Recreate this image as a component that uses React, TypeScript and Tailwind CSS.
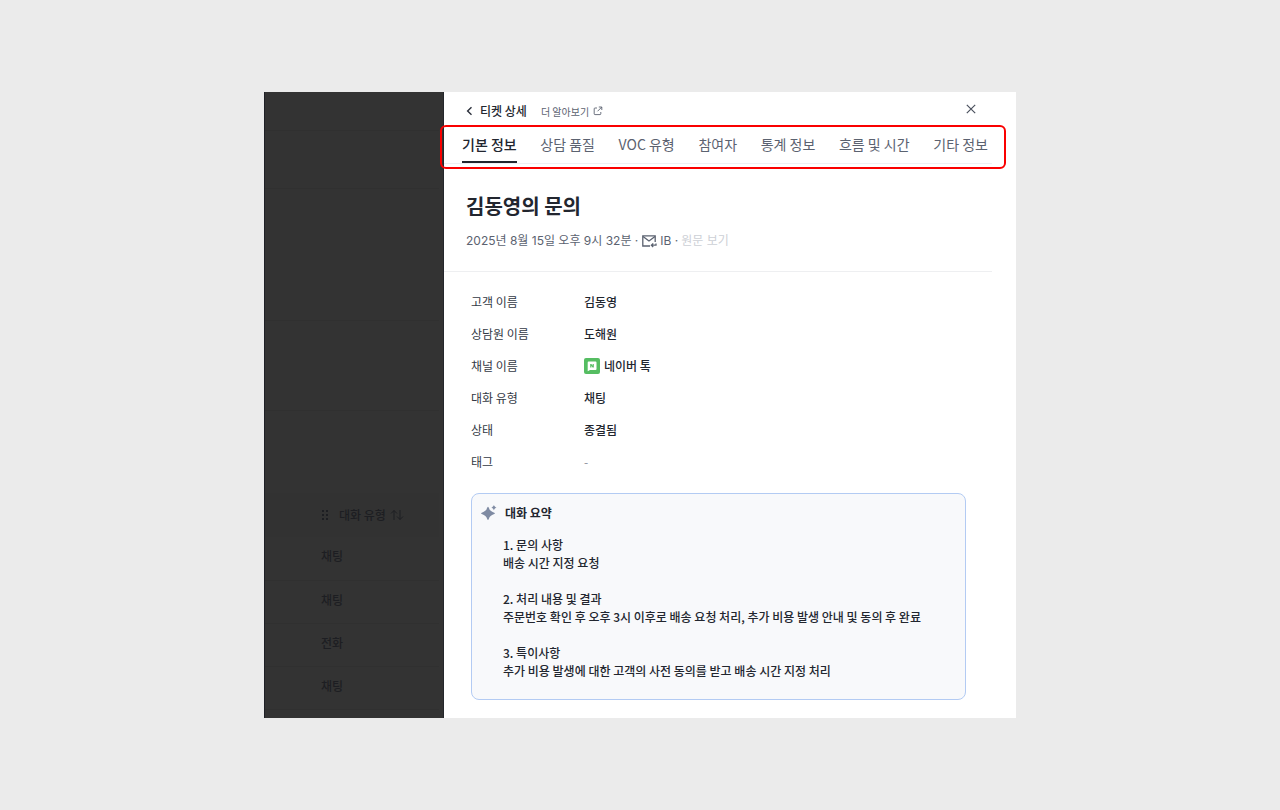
import { useState } from "react";

interface ChannelIconProps {
  className?: string;
}

const tabs = ["기본 정보", "상담 품질", "VOC 유형", "참여자", "통계 정보", "흐름 및 시간", "기타 정보"];

const channelRows = ["채팅", "채팅", "전화", "채팅"];

const summary = [
  { title: "1. 문의 사항", body: "배송 시간 지정 요청" },
  {
    title: "2. 처리 내용 및 결과",
    body: "주문번호 확인 후 오후 3시 이후로 배송 요청 처리, 추가 비용 발생 안내 및 동의 후 완료"
  },
  {
    title: "3. 특이사항",
    body: "추가 비용 발생에 대한 고객의 사전 동의를 받고 배송 시간 지정 처리"
  }
];

const ChannelIcon = ({ className }: ChannelIconProps) => (
  <svg viewBox="0 0 16 16" className={className}>
    <rect width="16" height="16" rx="2" fill="#55bd62" />
    <path d="M4.6 3.6h7a.9.9 0 0 1 .9.9v6.6a.9.9 0 0 1-.9.9H6l-2.3 1.2V4.5a.9.9 0 0 1 .9-.9z" fill="#fff" />
    <path d="M6.2 9.4V6h1.2l1.2 1.7V6h1.2v3.4H8.6L7.4 7.7v1.7z" fill="#55bd62" />
  </svg>
);

const MailIcon = () => (
  <svg viewBox="0 0 16 14" fill="none" stroke="#5b6270" strokeWidth="1.3" className="h-3.5 w-4">
    <path d="M9 12H1.8V1.8h12.4V8" />
    <path d="M2 2.6 8 7l6-4.4" />
    <path d="M15 9.5v1.7h-4.6M12.2 9.4l-1.8 1.8 1.8 1.8" />
  </svg>
);

const SparkleIcon = () => (
  <svg viewBox="0 0 16 16" fill="#7f8ba3" className="h-4 w-4">
    <path d="M6.3 2.6q.7-1.6 1.4 0C8.7 5.4 10 6.500 13.200 7.700q1.400.7 0 1.400C10 10.300 8.700 11.400 7.700 14.200q-.7 1.600-1.400 0C5.300 11.400 4 10.300.8 9.100q-1.400-.7 0-1.400C4 6.500 5.300 5.400 6.300 2.600z" />
    <path d="M12.9 0c.6 1.400 1.200 2 2.600 2.600-1.400.6-2 1.200-2.600 2.600-.6-1.400-1.200-2-2.600-2.600 1.400-.6 2-1.200 2.600-2.600z" />
  </svg>
);

// Dimmed ticket list behind the drawer
function DimmedList() {
  return (
    <aside className="flex w-[180px] shrink-0 flex-col border-x border-l-[#1e2026] border-r-[#24262b] bg-[#333333] pr-1 text-[#1d1e22]">
      <div className="h-[39px] border-b border-[#303030]" />
      <div className="h-[58px] border-b border-[#303030]" />
      <div className="h-[132px] border-b border-[#303030]" />
      <div className="h-[90px] border-b border-[#303030]" />
      <div className="h-[82px]" />
      <table className="w-full text-left text-xs">
        <thead>
          <tr className="h-[44px] bg-[#323232]">
            <th className="pl-14 font-medium">
              <span className="flex items-center">
                <svg viewBox="0 0 8 12" fill="currentColor" className="mr-2.5 h-3 w-2">
                  <path d="M1 1h2v2H1zM5 1h2v2H5zM1 5h2v2H1zM5 5h2v2H5zM1 9h2v2H1zM5 9h2v2H5z" />
                </svg>
                대화 유형
                <svg viewBox="0 0 14 12" fill="none" stroke="currentColor" className="ml-1 h-3 w-3.5">
                  <path d="M4 11V1.5M1 4.5l3-3 3 3M10 1v9.5M7 7.5l3 3 3-3" />
                </svg>
              </span>
            </th>
          </tr>
        </thead>
        <tbody>
          {channelRows.map((row, i) => (
            <tr key={i} className="h-[43px] border-b border-[#303030]">
              <td className="pb-1 pl-14 font-medium">{row}</td>
            </tr>
          ))}
        </tbody>
      </table>
    </aside>
  );
}

export default function App() {
  const [activeTab, setActiveTab] = useState("기본 정보");

  const fields = [
    { label: "고객 이름", value: "김동영" },
    { label: "상담원 이름", value: "도해원" },
    { label: "채널 이름", value: "네이버 톡", icon: true },
    { label: "대화 유형", value: "채팅" },
    { label: "상태", value: "종결됨" },
    { label: "태그", value: "-" }
  ];

  return (
    <main className="flex min-h-screen items-center justify-center bg-[#ebebeb] font-['Noto_Sans_CJK_KR',sans-serif]">
      <div className="flex w-full max-w-[752px] bg-white">
        <DimmedList />

        <section className="min-w-0 flex-1 pb-[18px]">
          <header className="flex h-[38px] items-center pl-5 pr-[38px]">
            <button type="button" aria-label="뒤로" className="text-[#2b303b]">
              <svg viewBox="0 0 12 12" fill="none" stroke="currentColor" strokeWidth="1.4" className="h-3 w-3">
                <path d="M7.5 2.2 3.6 6l3.9 3.8" />
              </svg>
            </button>
            <h1 className="ml-1 text-xs font-medium text-[#22262f]">티켓 상세</h1>
            <a href="#" className="ml-3.5 flex items-center gap-1 text-[10px] text-[#5b6270]">
              더 알아보기
              <svg viewBox="0 0 10 10" fill="none" stroke="currentColor" strokeWidth="0.9" className="h-2.5 w-2.5">
                <path d="M4 2H2a.8.8 0 0 0-.8.8v5a.8.8 0 0 0 .8.8h5a.8.8 0 0 0 .8-.8V6M5.8 1h3v3M8.8 1 4.5 5.3" />
              </svg>
            </a>
            <button type="button" aria-label="닫기" className="mb-1 ml-auto text-[#4b515e]">
              <svg viewBox="0 0 14 14" fill="none" stroke="currentColor" strokeWidth="1.2" className="h-3.5 w-3.5">
                <path d="m2.8 2.8 8.4 8.4M11.2 2.8l-8.4 8.4" />
              </svg>
            </button>
          </header>

          <div className="relative">
            <nav className="mr-6 flex justify-between border-b border-[#eef0f4] pl-[18px] pr-1">
              {tabs.map((tab) => (
                <button
                  key={tab}
                  type="button"
                  onClick={() => setActiveTab(tab)}
                  className={
                    tab === activeTab
                      ? "border-b-2 border-[#22262f] pb-0.5 text-sm leading-[29px] font-medium text-[#22262f]"
                      : "border-b-2 border-transparent pb-0.5 text-sm leading-[29px] text-[#5b6270]"
                  }>
                  {tab}
                </button>
              ))}
            </nav>
            {/* Highlight around the tab bar */}
            <div className="pointer-events-none absolute -top-[5px] right-2.5 -bottom-[5px] -left-1 rounded-md border-2 border-[#fa0000]" />
          </div>

          <div className="mr-6 border-b border-[#eeeff1] pt-7 pb-[22px] pl-[22px]">
            <h2 className="text-xl leading-7 font-bold text-[#22262f]">김동영의 문의</h2>
            <p className="mt-[13px] flex items-center gap-[3px] font-['Inter','Noto_Sans_CJK_KR',sans-serif] text-xs leading-4 text-[#5b6270]">
              2025년 8월 15일 오후 9시 32분 ·
              <MailIcon />
              IB ·
              <a href="#" className="text-[#cdd0d6]">원문 보기</a>
            </p>
          </div>

          <dl className="pt-3.5 pl-[27px] text-xs">
            {fields.map(({ label, value, icon }) => (
              <div key={label} className="flex h-8 items-center">
                <dt className="w-[113px] text-[#333945]">{label}</dt>
                <dd className={value === "-" ? "text-[#8b909b]" : "flex items-center gap-1 font-medium text-[#22262f]"}>
                  {icon && <ChannelIcon className="h-4 w-4" />}
                  {value}
                </dd>
              </div>
            ))}
          </dl>

          <article className="mt-[15px] mr-[50px] ml-[27px] rounded-lg border border-[#b3cbf3] bg-[#f8f9fb] pt-2 pr-4 pb-[19px] pl-[9px] text-xs text-[#22262f]">
            <h3 className="flex items-center gap-2 leading-[22px] font-bold">
              <SparkleIcon />
              대화 요약
            </h3>
            <div className="mt-3 flex flex-col gap-[18px] pl-[22px] leading-[18px] font-medium">
              {summary.map(({ title, body }) => (
                <div key={title}>
                  <h4>{title}</h4>
                  <p>{body}</p>
                </div>
              ))}
            </div>
          </article>
        </section>
      </div>
    </main>
  );
}
